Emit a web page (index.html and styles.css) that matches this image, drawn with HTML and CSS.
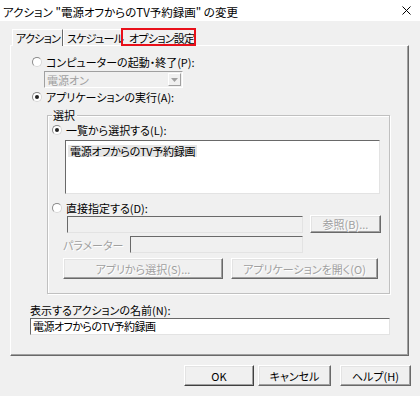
FILE: index.html
```html
<!DOCTYPE html>
<html lang="ja">
<head>
  <meta charset="UTF-8" />
  <title>アクションの変更</title>
  <link rel="stylesheet" href="styles.css">
</head>
<body>
  <div class="titlebar">
    <span class="title">アクション "電源オフからのTV予約録画" の変更</span>
    <svg class="close" width="9" height="9" viewBox="0 0 9 9">
      <path d="M0.5 0.5 L8.5 8.5 M8.5 0.5 L0.5 8.5" stroke="#000" stroke-width="1" fill="none"/>
    </svg>
  </div>

  <div class="window">
    <div class="tabs">
      <div class="tab active">アクション</div>
      <div class="tab">スケジュール</div>
      <div class="tab marked">オプション設定</div>
    </div>

    <div class="panel">
      <div class="radio-row outer"><span class="radio"></span>コンピューターの起動・終了(P):</div>
      <div class="combo">
        <span class="combo-text">電源オン</span>
        <span class="combo-btn">
          <svg width="7" height="4" viewBox="0 0 7 4"><path d="M0 0 H7 L3.5 4 Z" fill="#a0a0a0"/></svg>
        </span>
      </div>
      <div class="radio-row outer"><span class="radio checked"></span>アプリケーションの実行(A):</div>

      <fieldset class="group">
        <legend>選択</legend>
        <div class="radio-row first"><span class="radio checked"></span>一覧から選択する(L):</div>
        <div class="listbox">
          <span class="item">電源オフからのTV予約録画</span>
        </div>
        <div class="radio-row direct"><span class="radio"></span>直接指定する(D):</div>
        <div class="path-row">
          <div class="field off path"></div>
          <button class="btn off browse">参照(B)...</button>
        </div>
        <div class="param-row">
          <span class="param-label">パラメーター</span>
          <div class="field off param"></div>
        </div>
        <div class="app-row">
          <button class="btn off pick">アプリから選択(S)...</button>
          <button class="btn off open">アプリケーションを開く(O)</button>
        </div>
      </fieldset>

      <div class="name-label">表示するアクションの名前(N):</div>
      <div class="field name">電源オフからのTV予約録画</div>
    </div>

    <div class="footer">
      <button class="btn ok">OK</button>
      <button class="btn cancel">キャンセル</button>
      <button class="btn help">ヘルプ(H)</button>
    </div>
  </div>
</body>
</html>
```

FILE: styles.css
```css
body {
  margin: 0;
  width: 420px;
  height: 396px;
  overflow: hidden;
  background: #f0f0f0;
  font-family: "Noto Sans CJK JP", "Noto Sans", sans-serif;
  font-size: 11px;
  font-feature-settings: "palt";
  color: #000;
}

.titlebar {
  height: 21px;
  background: #fff;
  display: flex;
  align-items: center;
  justify-content: space-between;
  padding: 0 9px 0 3px;
  box-sizing: border-box;
}

.title {
  font-size: 11.5px;
  line-height: 14px;
  margin-top: 2px;
}

.window {
  padding: 8px 9px 0 10px;
}

/* Tabs */
.tabs {
  display: flex;
  height: 16px;
  margin-left: 2px;
}

.tab {
  height: 16px;
  line-height: 16px;
  padding: 0 0 0 3px;
  box-sizing: border-box;
  border-left: 1px solid #fff;
  border-top: 1px solid #fff;
  border-right: 1px solid #696969;
  white-space: nowrap;
  letter-spacing: -0.7px;
  overflow: visible;
}

.tab.active {
  width: 51px;
  height: 17px;
  background: #f0f0f0;
  position: relative;
  z-index: 1;
}

.tab:nth-child(2) {
  width: 59px;
}

.tab.marked {
  width: 73px;
  padding-left: 6px;
  outline: 2px solid #e8101a;
  outline-offset: -1px;
}

/* Tab page */
.panel {
  width: 399px;
  height: 311px;
  box-sizing: border-box;
  border: 1px solid;
  border-color: #fff #696969 #696969 #fff;
  box-shadow: inset -1px -1px 0 #a0a0a0;
  padding-top: 9px;
}

.radio-row {
  display: flex;
  align-items: center;
  height: 14px;
  line-height: 14px;
  white-space: nowrap;
}

.radio-row.outer {
  margin-left: 21px;
}

.radio-row.outer + .radio-row.outer,
.combo + .radio-row {
  margin-top: 2px;
}

.radio {
  width: 10px;
  height: 10px;
  box-sizing: border-box;
  border-radius: 50%;
  border: 1px solid;
  border-color: #8a8a8a #d8d8d8 #d8d8d8 #8a8a8a;
  background: #fff;
  margin-right: 4px;
  position: relative;
  flex: none;
}

.radio.checked::after {
  content: "";
  position: absolute;
  left: 2px;
  top: 2px;
  width: 4px;
  height: 4px;
  border-radius: 50%;
  background: #222;
}

.combo {
  margin: 2px 0 0 33px;
  width: 139px;
  height: 17px;
  box-sizing: border-box;
  border: 1px solid;
  border-color: #a0a0a0 #fff #fff #a0a0a0;
  display: flex;
  align-items: center;
  justify-content: space-between;
  color: #a0a0a0;
}

.combo-text {
  padding-left: 2px;
  line-height: 14px;
}

.combo-btn {
  width: 13px;
  height: 13px;
  margin-right: 1px;
  box-sizing: border-box;
  border: 1px solid;
  border-color: #fff #a0a0a0 #a0a0a0 #fff;
  display: flex;
  align-items: center;
  justify-content: center;
}

/* Group box */
.group {
  margin: 4px 0 0 36px;
  width: 343px;
  box-sizing: border-box;
  border: 1px solid #c0c0c0;
  box-shadow: inset 1px 1px 0 #fff, 1px 1px 0 #fff;
  padding: 0 0 14px 4px;
  min-width: 0;
}

.group legend {
  padding: 0 2px 0 1px;
  line-height: 14px;
  background: #f0f0f0;
}

.radio-row.first {
  margin-top: 1px;
}

.listbox {
  margin: 3px 0 0 13px;
  width: 315px;
  height: 54px;
  box-sizing: border-box;
  border: 1px solid;
  border-color: #696969 #e3e3e3 #e3e3e3 #696969;
  background: #fff;
  padding: 2px 0 0 2px;
}

.item {
  display: inline-block;
  background: #e6e6e6;
  line-height: 12px;
  padding: 0 2px;
  letter-spacing: -0.3px;
}

.radio-row.direct {
  margin-top: 7px;
}

.path-row {
  display: flex;
  align-items: flex-start;
  gap: 7px;
  margin-left: 15px;
}

.field {
  height: 17px;
  box-sizing: border-box;
  border: 1px solid;
  border-color: #696969 #e3e3e3 #e3e3e3 #696969;
  background: #fff;
  line-height: 14px;
  padding-left: 2px;
  white-space: nowrap;
}

.field.off {
  background: #f0f0f0;
}

.field.path {
  width: 236px;
  margin-top: 1px;
}

.field.name {
  margin: 1px 0 0 19px;
  width: 360px;
  letter-spacing: -0.5px;
}

.param-row {
  display: flex;
  align-items: center;
  margin: 3px 0 0 11px;
}

.param-label {
  width: 67px;
  color: #a0a0a0;
  text-shadow: 1px 1px 0 #fff;
  line-height: 14px;
}

.field.param {
  width: 173px;
}

.app-row {
  display: flex;
  gap: 8px;
  margin: 5px 0 0 11px;
}

.name-label {
  margin: 9px 0 0 19px;
  line-height: 14px;
}

/* Buttons */
.btn {
  font: inherit;
  font-feature-settings: "palt";
  color: #000;
  background: #f0f0f0;
  box-sizing: border-box;
  height: 21px;
  padding: 0;
  border: 1px solid;
  border-color: #fff #696969 #696969 #fff;
  box-shadow: inset -1px -1px 0 #a0a0a0, inset 1px 1px 0 #e3e3e3;
  white-space: nowrap;
}

.btn.off {
  color: #a0a0a0;
  text-shadow: 1px 1px 0 #fff;
}

.browse {
  width: 71px;
  height: 18px;
}

.pick {
  width: 160px;
}

.open {
  width: 147px;
}

.footer {
  display: flex;
  justify-content: flex-end;
  margin-top: 9px;
}

.ok {
  width: 70px;
  border-color: #fff #404040 #404040 #fff;
}

.cancel {
  width: 73px;
  margin-left: 4px;
}

.help {
  width: 71px;
  margin-left: 9px;
}
```
